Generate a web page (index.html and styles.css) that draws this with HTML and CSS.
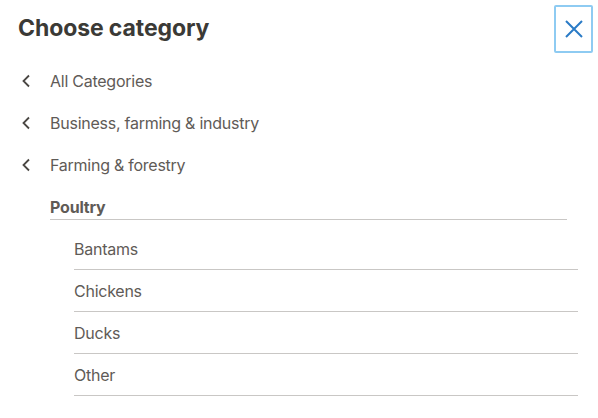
FILE: index.html
```html
<!DOCTYPE html>
<html>
<head>
<meta charset="utf-8">
<link rel="stylesheet" href="styles.css">
</head>
<body>
<div class="panel">
  <header class="header">
    <h1 class="title">Choose category</h1>
    <button class="close" aria-label="Close">
      <svg width="20" height="20" viewBox="0 0 20 20"><path d="M2 2 L18 18 M18 2 L2 18" stroke="#2a7bc6" stroke-width="2" fill="none"/></svg>
    </button>
  </header>
  <ul class="crumbs">
    <li class="crumb"><svg class="chev" width="12" height="16" viewBox="0 0 12 16"><path d="M9 2.5 L3.5 8 L9 13.5" stroke="#4a4743" stroke-width="1.8" fill="none"/></svg><span>All Categories</span></li>
    <li class="crumb"><svg class="chev" width="12" height="16" viewBox="0 0 12 16"><path d="M9 2.5 L3.5 8 L9 13.5" stroke="#4a4743" stroke-width="1.8" fill="none"/></svg><span>Business, farming &amp; industry</span></li>
    <li class="crumb"><svg class="chev" width="12" height="16" viewBox="0 0 12 16"><path d="M9 2.5 L3.5 8 L9 13.5" stroke="#4a4743" stroke-width="1.8" fill="none"/></svg><span>Farming &amp; forestry</span></li>
  </ul>
  <div class="group">
    <div class="group-title">Poultry</div>
    <ul class="items">
      <li class="item">Bantams</li>
      <li class="item">Chickens</li>
      <li class="item">Ducks</li>
      <li class="item">Other</li>
    </ul>
  </div>
</div>
</body>
</html>
```
FILE: styles.css
```css
* { box-sizing: border-box; }
html, body { margin: 0; padding: 0; background: #fff; }
body { font-family: Inter, "Open Sans", sans-serif; color: #5f5b57; }
.panel { width: 598px; }
.header { display: flex; justify-content: space-between; align-items: flex-start; height: 60px; padding: 5px 5px 0 18px; }
.title { margin: 0; padding-top: 9px; font-size: 23px; line-height: 28px; font-weight: 700; color: #3b3a36; letter-spacing: -0.1px; }
.close { width: 39px; height: 48px; border: 2px solid #8ecbf2; border-radius: 2px; background: #fff; display: flex; align-items: center; justify-content: center; padding: 0; }
.crumbs { list-style: none; margin: 0; padding: 0; }
.crumb { display: flex; align-items: center; height: 42px; padding-left: 20px; font-size: 16px; letter-spacing: -0.25px; }
.chev { margin-right: 18px; }
.group { padding-left: 50px; }
.group-title { font-size: 16px; font-weight: 700; color: #5f5b57; line-height: 20px; padding: 11px 0 2px; width: 517px; border-bottom: 1px solid #c9c7c5; letter-spacing: -0.2px; }
.items { list-style: none; margin: 0; padding: 8px 0 0 24px; }
.item { width: 504px; height: 42px; font-size: 16px; line-height: 20px; padding-top: 11px; border-bottom: 1px solid #c9c7c5; letter-spacing: -0.25px; }
```
